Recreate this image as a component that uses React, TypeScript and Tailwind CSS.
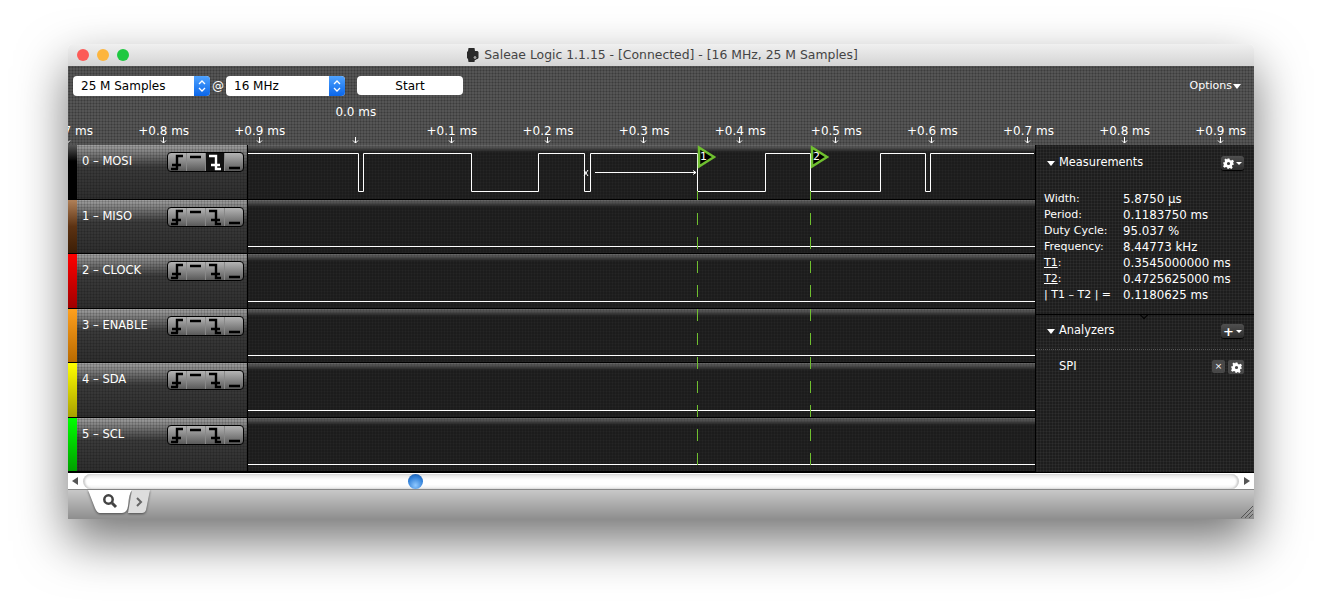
const font = "[font-family:'DejaVu_Sans',sans-serif]"

const ticks = ["+0.7 ms", "+0.8 ms", "+0.9 ms", "0.0 ms", "+0.1 ms", "+0.2 ms", "+0.3 ms", "+0.4 ms", "+0.5 ms", "+0.6 ms", "+0.7 ms", "+0.8 ms", "+0.9 ms"]

const channels = [
  { name: "0 – MOSI", strip: "bg-[linear-gradient(#555,#000_30%)]", active: true },
  { name: "1 – MISO", strip: "bg-[linear-gradient(#b08058,#5c3212_50%,#3c1e06)]", active: false },
  { name: "2 – CLOCK", strip: "bg-[linear-gradient(#f00,#a00000)]", active: false },
  { name: "3 – ENABLE", strip: "bg-[linear-gradient(#ffa01e,#b86a00)]", active: false },
  { name: "4 – SDA", strip: "bg-[linear-gradient(#ff0,#a8a000)]", active: false },
  { name: "5 – SCL", strip: "bg-[linear-gradient(#0f0,#00a000)]", active: false },
]

const measurements = [
  ["Width:", "5.8750 µs"],
  ["Period:", "0.1183750 ms"],
  ["Duty Cycle:", "95.037 %"],
  ["Frequency:", "8.44773 kHz"],
  ["T1:", "0.3545000000 ms"],
  ["T2:", "0.4725625000 ms"],
  ["| T1 – T2 | =", "0.1180625 ms"],
]

function TriggerButtons({ active }: { active: boolean }) {
  const icons = [
    "M2 16h7M8 16V3h6M3 12h9",
    "M2 4h11",
    "M2 3h7v13h5M4 12h9",
    "M3 15h11",
  ]
  return (
    <div className="flex h-[20px] w-[77px] overflow-hidden rounded-[4px] border border-black bg-[linear-gradient(#b4b4b4,#5a5a5a)]">
      {icons.map((d, i) => {
        const on = active && i === 2
        return (
          <div key={d} className={`flex flex-1 items-center justify-center border-r border-[#888] last:border-r-0 ${on ? "bg-[#111]" : ""}`}>
            <svg width="16" height="18" viewBox="0 0 16 18" fill="none" stroke={on ? "#fff" : "#000"} strokeWidth="2.400">
              <path d={d} />
            </svg>
          </div>
        )
      })}
    </div>
  )
}

function Chevrons() {
  return (
    <div className="flex w-[16px] flex-col items-center justify-center gap-[2px] self-stretch rounded-r-[4px] bg-[linear-gradient(#4fa3ff,#0a66ea)]">
      <svg width="8" height="5" viewBox="0 0 8 5" fill="none" stroke="#fff" strokeWidth="1.300"><path d="M1 4l3-3 3 3" /></svg>
      <svg width="8" height="5" viewBox="0 0 8 5" fill="none" stroke="#fff" strokeWidth="1.300"><path d="M1 1l3 3 3-3" /></svg>
    </div>
  )
}

function Select({ label, w }: { label: string; w: string }) {
  return (
    <div className={`flex h-[20px] ${w} items-center rounded-[4px] bg-white text-[12px] text-black`}>
      <span className="flex-1 pl-[8px]">{label}</span>
      <Chevrons />
    </div>
  )
}

function Gear() {
  return (
    <svg width="11" height="11" viewBox="0 0 24 24" fill="#fff">
      <path fillRule="evenodd" d="M10 1h4l1 3.500 2.500 1L21 4l3 3-2 3 1 2.500L24 14l-3.500 1-1 2.500L21 21l-3 3-3-2-2.500 1L12 24h-2l-1-3.500-2.500-1L3 21l-3-3 2-3-1-2.500L0 10l3.500-1 1-2.500L3 4l3-3 3 2z M12 8.500a3.500 3.500 0 100 7 3.500 3.500 0 000-7z" />
    </svg>
  )
}

function PanelButton({ children }: { children: React.ReactNode }) {
  return (
    <div className="flex h-[14px] w-[23px] items-center justify-center gap-[2px] rounded-[3px] bg-[linear-gradient(#505050,#2c2c2c)] shadow-[0_1px_1px_#000]">
      {children}
      <span className="h-0 w-0 border-x-[3px] border-t-[3px] border-x-transparent border-t-white" />
    </div>
  )
}

function SectionTitle({ title, children }: { title: string; children: React.ReactNode }) {
  return (
    <div className="flex h-[16px] items-center justify-between pl-[11px] pr-[10px]">
      <div className="flex items-center gap-[4px]">
        <span className="h-0 w-0 border-x-[4px] border-t-[5px] border-x-transparent border-t-white" />
        <span className="text-[11.400px] font-medium text-white">{title}</span>
      </div>
      {children}
    </div>
  )
}

const wave = "M0 8.500H110.500V46.500H115.500V8.500H223.500V46.500H290.500V8.500H336.500V46.500H342.500V8.500H449.500V46.500H517.500V8.500H562.500V46.500H632.500V8.500H677.500V46.500H682.500V8.500H786"

export default function App() {
  return (
    <div className={`h-[611px] w-full overflow-hidden bg-white px-[68px] pt-[44px] ${font}`}>
      <div className="flex h-[475px] w-[1186px] flex-col rounded-t-[5px] shadow-[0_22px_50px_rgba(0,0,0,0.55)]">
        {/* TITLE BAR */}
        <div className="relative flex h-[22px] items-center justify-center rounded-t-[5px] bg-[linear-gradient(#f0f0f0,#d4d4d4)] pl-[2px]">
          <div className="absolute left-[9px] top-[5px] flex gap-[8px]">
            <span className="h-[12px] w-[12px] rounded-full bg-[#fc5b57]" />
            <span className="h-[12px] w-[12px] rounded-full bg-[#fdb53e]" />
            <span className="h-[12px] w-[12px] rounded-full bg-[#1ec840]" />
          </div>
          <svg width="13" height="14" viewBox="0 0 13 14" className="mr-[5px]">
            <path d="M2.500 0h6l.5 3h2.500l1 1v6l-1 1H9l-.5 3h-6L2 11 1 10V4l1-1z" fill="#2a2a2a" />
            <circle cx="9" cy="9.500" r="2" fill="#999" stroke="#222" />
          </svg>
          <span className="text-[12.400px] text-[#444]">Saleae Logic 1.1.15 - [Connected] - [16 MHz, 25 M Samples]</span>
        </div>

        {/* TOOLBAR */}
        <div className="relative h-[79px] overflow-hidden bg-[#555] bg-[radial-gradient(#3c3c3c_0.9px,transparent_1.100px)] bg-[length:3px_3px]">
          <div className="flex items-center pl-[5px] pt-[10px]">
            <Select label="25 M Samples" w="w-[137px]" />
            <span className="mx-[1px] w-[14px] text-center text-[12px] text-white">@</span>
            <Select label="16 MHz" w="w-[119px]" />
            <div className="ml-[12px] flex h-[19px] w-[106px] items-center justify-center self-start rounded-[4px] bg-white text-[12px] text-black">Start</div>
            <div className="ml-auto flex items-center gap-[1px] pr-[13px] text-[11px] text-white">
              Options
              <span className="h-0 w-0 border-x-[4px] border-t-[5px] border-x-transparent border-t-white" />
            </div>
          </div>
          <div className="ml-[-49px] mt-[8px] flex">
            {ticks.map((t, i) => (
              <div key={i} className="flex h-[40px] w-[96.100px] shrink-0 flex-col items-center justify-end whitespace-nowrap text-[12px] leading-[12px] text-white">
                <span className={t === "0.0 ms" ? "mb-[19px] pl-[1px]" : "pl-[1px]"}>{t}</span>
                <svg width="7" height="7" viewBox="0 0 7 7" fill="none" stroke="#fff"><path d="M3.500 0v6M1 3.500l2.500 2.500 2.500-2.500" /></svg>
              </div>
            ))}
          </div>
        </div>

        {/* CHANNELS + SIDE PANEL */}
        <div className="flex h-[327px] bg-[#1d1d1d]">
          <div className="relative flex w-[967px] flex-col">
            {channels.map((c, i) => (
              <div key={c.name} className="flex flex-1 border-b border-black last:border-b-0">
                <div className={`w-[9px] ${c.strip}`} />
                <div className="flex w-[170px] items-start justify-between bg-[radial-gradient(#00000040_0.9px,transparent_1.100px),linear-gradient(#a0a0a0,#3a3a3a_22px,#2e2e2e)] bg-[length:3px_3px,100%_100%] pl-[5px] pr-[3px] pt-[7px]">
                  <span className="pt-[1px] text-[11.500px] font-medium leading-[16px] text-white">{c.name}</span>
                  <TriggerButtons active={c.active} />
                </div>
                <div className="relative flex-1 border-l border-black bg-[radial-gradient(#33333366_0.9px,transparent_1.100px),linear-gradient(#6a6a6a,#2a2a2a_6px,#1c1c1c_7px)] bg-[length:3px_3px,100%_100%]">
                  {i === 0 ? (
                    <svg width="786" height="50" className="block">
                      <path d={wave} fill="none" stroke="#fff" strokeWidth="1" />
                    </svg>
                  ) : (
                    <div className="absolute inset-x-0 bottom-[6px] h-px bg-white" />
                  )}
                </div>
              </div>
            ))}

            {/* cursors lying over the traces */}
            <svg width="40" height="327" className="pointer-events-none absolute left-[610px] top-0 overflow-visible">
              <path d="M19.500 46v9" stroke="#6fbf2f" />
              <path d="M19.500 68V327" stroke="#6fbf2f" strokeDasharray="12 12" />
              <path d="M132.500 46v9" stroke="#6fbf2f" />
              <path d="M132.500 68V327" stroke="#6fbf2f" strokeDasharray="12 12" />
              <path d="M21 2.500L36 12 21 21.500z" fill="#000" stroke="#6fbf2f" strokeWidth="2.500" />
              <path d="M134 2.500L149 12 134 21.500z" fill="#000" stroke="#6fbf2f" strokeWidth="2.500" />
              <path d="M-83 27.500H18M15 25.500l3 2-3 2" fill="none" stroke="#fff" />
              <path d="M-94 25l4 6M-90 25l-4 6" stroke="#fff" />
            </svg>
            <div className="absolute left-[632px] top-[4px] text-[11px] text-white">1</div>
            <div className="absolute left-[745px] top-[4px] text-[11px] font-medium text-white">2</div>
          </div>

          <div className="flex w-[219px] flex-col border-l border-black bg-[radial-gradient(#2e2e2e_0.9px,transparent_1.100px)] bg-[length:3px_3px] pt-[10px]">
            <SectionTitle title="Measurements">
              <PanelButton><Gear /></PanelButton>
            </SectionTitle>
            <div className="mt-[20px] flex flex-col pl-[8px] leading-[16px] text-white">
              {measurements.map(([k, v]) => (
                <div key={k} className="flex">
                  <span className="w-[79px] whitespace-nowrap text-[11px] font-medium">
                    {k.length === 3 ? <><span className="underline">{k.slice(0, 2)}</span>:</> : k}
                  </span>
                  <span className="text-[11.800px]">{v}</span>
                </div>
              ))}
            </div>
            <div className="relative mt-[11px] h-px bg-black">
              <span className="absolute left-[105px] top-0 h-[6px] w-[6px] -translate-y-[2px] rotate-45 border-b border-r border-black" />
            </div>
            <div className="pb-[10px] pt-[8px]">
              <SectionTitle title="Analyzers">
                <PanelButton>
                  <span className="text-[13px] font-bold leading-none text-white">+</span>
                </PanelButton>
              </SectionTitle>
            </div>
            <div className="border-t border-dotted border-[#555]" />
            <div className="mt-[9px] flex h-[16px] items-center justify-between pl-[23px] pr-[10px]">
              <span className="text-[11.500px] font-medium text-white">SPI</span>
              <div className="flex gap-[3px]">
                <div className="flex h-[13px] w-[13px] items-center justify-center rounded-[2px] bg-[#484848] text-[9px] leading-none text-white">×</div>
                <div className="flex h-[14px] w-[16px] items-center justify-center rounded-[2px] bg-[#484848]"><Gear /></div>
              </div>
            </div>
          </div>
        </div>

        {/* SCROLLBAR */}
        <div className="flex h-[17px] items-center border-t border-black bg-white">
          <span className="ml-[4px] h-0 w-0 border-y-[4px] border-r-[6px] border-y-transparent border-r-[#555]" />
          <div className="relative mx-[5px] h-[15px] flex-1 rounded-full bg-[linear-gradient(#e0e0e0,#fff_40%,#fff_70%,#eee)] shadow-[inset_2px_0_2px_#ccc,inset_-2px_0_2px_#ccc]">
            <span className="absolute left-[325px] top-0 h-[15px] w-[15px] rounded-full bg-[radial-gradient(circle_at_50%_75%,#8fc8ff,#2f7fd8_60%,#174f9a)]" />
          </div>
          <span className="mr-[4px] h-0 w-0 border-y-[4px] border-l-[6px] border-y-transparent border-l-[#555]" />
        </div>

        {/* TAB BAR */}
        <div className="relative flex h-[30px] items-start border-t border-[#888] bg-[linear-gradient(#c8c8c8,#8e8e8e)] pl-[20px]">
          <svg width="66" height="26" viewBox="0 0 66 26" className="drop-shadow-[0_1px_1px_rgba(0,0,0,0.5)]">
            <path d="M44 0L62 0 58 20Q57 23 54 23H40z" fill="#ddd" />
            <path d="M0 0H44Q41 3 40 16 39 23 34 23H12Q9 23 7 18z" fill="#fff" />
            <circle cx="20.500" cy="9.500" r="4.200" fill="none" stroke="#444" strokeWidth="2.500" />
            <path d="M24 13l4 4" stroke="#444" strokeWidth="3" />
            <path d="M49 8l4 4-4 4" fill="none" stroke="#666" strokeWidth="2" />
          </svg>
          <svg width="14" height="14" viewBox="0 0 14 14" stroke="#555" className="absolute bottom-0 right-0">
            <path d="M1 13L13 1M5 13l8-8M9 13l4-4" />
          </svg>
        </div>
      </div>
    </div>
  )
}
